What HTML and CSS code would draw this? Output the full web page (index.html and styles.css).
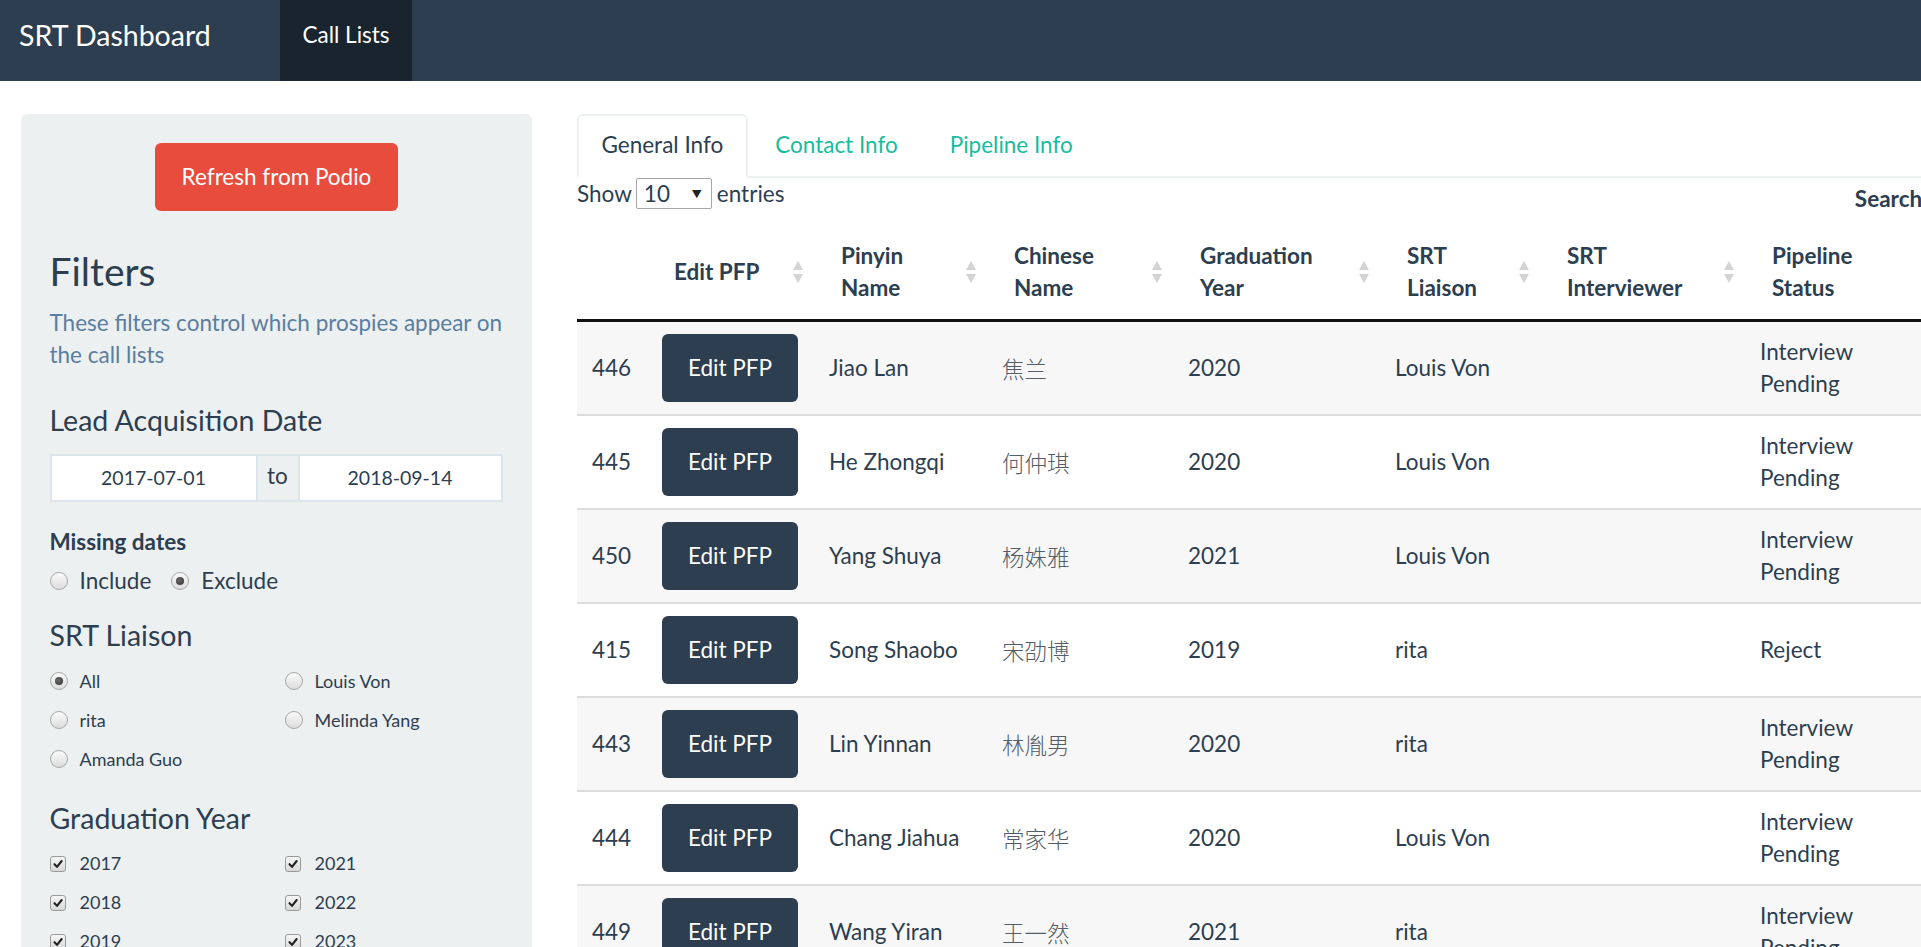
FILE: index.html
```html
<!DOCTYPE html>
<html lang="en">
<head>
<meta charset="utf-8">
<title>SRT Dashboard</title>
<link rel="stylesheet" href="styles.css">
</head>
<body>
<nav class="navbar">
  <div class="brand">SRT Dashboard</div>
  <ul class="nav">
    <li class="active">Call Lists</li>
  </ul>
</nav>
<div class="page">
  <aside class="well">
    <button class="btn-refresh">Refresh from Podio</button>
    <h3 class="filters-title">Filters</h3>
    <p class="help">These filters control which prospies appear on the call lists</p>

    <h4 class="date-title">Lead Acquisition Date</h4>
    <div class="daterange">
      <span class="date-input first">2017-07-01</span>
      <span class="addon">to</span>
      <span class="date-input second">2018-09-14</span>
    </div>

    <div class="control-label">Missing dates</div>
    <div class="inline-opts">
      <span class="opt"><span class="radio"></span>Include</span>
      <span class="opt"><span class="radio checked"></span>Exclude</span>
    </div>

    <h4 class="group-title">SRT Liaison</h4>
    <div class="opt-grid rows3">
      <span class="opt small"><span class="radio checked"></span>All</span>
      <span class="opt small"><span class="radio"></span>rita</span>
      <span class="opt small"><span class="radio"></span>Amanda Guo</span>
      <span class="opt small"><span class="radio"></span>Louis Von</span>
      <span class="opt small"><span class="radio"></span>Melinda Yang</span>
    </div>

    <h4 class="group-title grad-title">Graduation Year</h4>
    <div class="opt-grid rows4">
      <span class="opt small cb"><span class="checkbox"><svg viewBox="0 0 16 16"><path d="M4 8.2 L6.9 11.3 L12.2 4.6"/></svg></span>2017</span>
      <span class="opt small cb"><span class="checkbox"><svg viewBox="0 0 16 16"><path d="M4 8.2 L6.9 11.3 L12.2 4.6"/></svg></span>2018</span>
      <span class="opt small cb"><span class="checkbox"><svg viewBox="0 0 16 16"><path d="M4 8.2 L6.9 11.3 L12.2 4.6"/></svg></span>2019</span>
      <span class="opt small cb"><span class="checkbox"><svg viewBox="0 0 16 16"><path d="M4 8.2 L6.9 11.3 L12.2 4.6"/></svg></span>2020</span>
      <span class="opt small cb"><span class="checkbox"><svg viewBox="0 0 16 16"><path d="M4 8.2 L6.9 11.3 L12.2 4.6"/></svg></span>2021</span>
      <span class="opt small cb"><span class="checkbox"><svg viewBox="0 0 16 16"><path d="M4 8.2 L6.9 11.3 L12.2 4.6"/></svg></span>2022</span>
      <span class="opt small cb"><span class="checkbox"><svg viewBox="0 0 16 16"><path d="M4 8.2 L6.9 11.3 L12.2 4.6"/></svg></span>2023</span>
    </div>
  </aside>

  <main class="main">
    <ul class="tabs">
      <li class="active">General Info</li>
      <li>Contact Info</li>
      <li>Pipeline Info</li>
    </ul>

    <div class="dt-controls">
      <div class="dt-length">Show <span class="select">10<span class="caret">&#9660;</span></span> entries</div>
      <div class="dt-filter"><span class="search-label">Search:</span><span class="search-input"></span></div>
    </div>

    <table class="dt">
      <colgroup>
        <col class="c-id"><col class="c-edit"><col class="c-pinyin"><col class="c-zh"><col class="c-grad"><col class="c-liaison"><col class="c-int"><col class="c-pipe">
      </colgroup>
      <thead>
        <tr>
          <th class="th-id"></th>
          <th>Edit PFP<span class="sort"><svg viewBox="0 0 10 22"><polygon points="5,0 10,9 0,9"/><polygon points="0,13 10,13 5,22"/></svg></span></th>
          <th>Pinyin Name<span class="sort"><svg viewBox="0 0 10 22"><polygon points="5,0 10,9 0,9"/><polygon points="0,13 10,13 5,22"/></svg></span></th>
          <th>Chinese Name<span class="sort"><svg viewBox="0 0 10 22"><polygon points="5,0 10,9 0,9"/><polygon points="0,13 10,13 5,22"/></svg></span></th>
          <th>Graduation Year<span class="sort"><svg viewBox="0 0 10 22"><polygon points="5,0 10,9 0,9"/><polygon points="0,13 10,13 5,22"/></svg></span></th>
          <th>SRT Liaison<span class="sort"><svg viewBox="0 0 10 22"><polygon points="5,0 10,9 0,9"/><polygon points="0,13 10,13 5,22"/></svg></span></th>
          <th>SRT Interviewer<span class="sort"><svg viewBox="0 0 10 22"><polygon points="5,0 10,9 0,9"/><polygon points="0,13 10,13 5,22"/></svg></span></th>
          <th>Pipeline Status</th>
        </tr>
      </thead>
      <tbody>
        <tr><td>446</td><td><span class="btn-edit">Edit PFP</span></td><td>Jiao Lan</td><td class="zh">焦兰</td><td>2020</td><td>Louis Von</td><td></td><td>Interview Pending</td></tr>
        <tr><td>445</td><td><span class="btn-edit">Edit PFP</span></td><td>He Zhongqi</td><td class="zh">何仲琪</td><td>2020</td><td>Louis Von</td><td></td><td>Interview Pending</td></tr>
        <tr><td>450</td><td><span class="btn-edit">Edit PFP</span></td><td>Yang Shuya</td><td class="zh">杨姝雅</td><td>2021</td><td>Louis Von</td><td></td><td>Interview Pending</td></tr>
        <tr><td>415</td><td><span class="btn-edit">Edit PFP</span></td><td>Song Shaobo</td><td class="zh">宋劭博</td><td>2019</td><td>rita</td><td></td><td>Reject</td></tr>
        <tr><td>443</td><td><span class="btn-edit">Edit PFP</span></td><td>Lin Yinnan</td><td class="zh">林胤男</td><td>2020</td><td>rita</td><td></td><td>Interview Pending</td></tr>
        <tr><td>444</td><td><span class="btn-edit">Edit PFP</span></td><td>Chang Jiahua</td><td class="zh">常家华</td><td>2020</td><td>Louis Von</td><td></td><td>Interview Pending</td></tr>
        <tr><td>449</td><td><span class="btn-edit">Edit PFP</span></td><td>Wang Yiran</td><td class="zh">王一然</td><td>2021</td><td>rita</td><td></td><td>Interview Pending</td></tr>
      </tbody>
    </table>
  </main>
</div>
</body>
</html>
```

FILE: styles.css
```css
html, body {
  margin: 0;
  padding: 0;
  overflow: hidden;
}

body {
  width: 1921px;
  height: 947px;
  font-family: Lato, "Noto Sans CJK SC", sans-serif;
  font-size: 22.5px;
  line-height: 32px;
  color: #2c3e50;
  background: #fff;
}

/* ---------- navbar ---------- */
.navbar {
  display: flex;
  height: 81px;
  background: #2c3e50;
}

.brand {
  box-sizing: border-box;
  width: 280px;
  padding-left: 19px;
  font-size: 28.5px;
  line-height: 70px;
  color: #fff;
}

.nav {
  display: flex;
  margin: 0;
  padding: 0;
  list-style: none;
}

.nav li {
  height: 81px;
  padding: 0 22.5px;
  line-height: 70px;
  color: #fff;
}

.nav li.active {
  background: #1a242f;
}

/* ---------- layout ---------- */
.page {
  display: flex;
  gap: 45px;
  padding: 33px 0 0 21px;
}

.well {
  flex: 0 0 511px;
  box-sizing: border-box;
  height: 900px;
  padding: 29px 28.5px;
  background: #ecf0f1;
  border-radius: 6px;
}

.main {
  flex: 0 0 1610px;
  min-width: 0;
}

/* ---------- sidebar ---------- */
.btn-refresh {
  display: block;
  margin: 0 auto;
  height: 68px;
  padding: 0 26.5px;
  border: 0;
  border-radius: 6px;
  background: #e74c3c;
  color: #fff;
  font-family: Lato, sans-serif;
  font-size: 22.5px;
  line-height: 68px;
}

.filters-title {
  margin: 39px 0 14px;
  font-size: 39px;
  line-height: 43px;
  font-weight: 400;
}

.help {
  margin: 0;
  color: #597ea2;
}

h4 {
  font-size: 28.5px;
  line-height: 31px;
  font-weight: 400;
}

.date-title {
  margin: 34px 0 18px;
}

.daterange {
  display: flex;
  height: 48px;
  width: 453px;
}

.date-input {
  box-sizing: border-box;
  height: 48px;
  background: #fff;
  border: 2px solid #dce4ec;
  font-size: 19.5px;
  line-height: 44px;
  text-align: center;
}

.date-input.first {
  width: 208px;
}

.date-input.second {
  width: 205px;
}

.addon {
  box-sizing: border-box;
  width: 40px;
  height: 48px;
  background: #ecf0f1;
  border-top: 2px solid #dce4ec;
  border-bottom: 2px solid #dce4ec;
  line-height: 40px;
  text-align: center;
}

.control-label {
  margin-top: 24px;
  font-weight: 700;
}

.inline-opts {
  display: flex;
  gap: 20px;
  margin-top: 7px;
}

.opt {
  display: inline-flex;
  align-items: center;
  gap: 12px;
}

.group-title {
  margin: 23px 0 10.5px;
}

.grad-title {
  margin-top: 24px;
}

.opt-grid {
  display: grid;
  grid-template-columns: 235px 1fr;
  grid-auto-flow: column;
}

.opt-grid.rows3 {
  grid-template-rows: repeat(3, 39px);
}

.opt-grid.rows4 {
  grid-template-rows: repeat(4, 39px);
}

.opt.small {
  font-size: 18px;
  line-height: 39px;
}

.opt.cb {
  gap: 14px;
}

.radio {
  position: relative;
  box-sizing: border-box;
  width: 18px;
  height: 18px;
  border: 1px solid #a7a7a7;
  border-radius: 50%;
  background: linear-gradient(#fbfbfb, #dcdcdc);
  flex: 0 0 auto;
}

.radio.checked::after {
  content: "";
  position: absolute;
  left: 4px;
  top: 4px;
  width: 8px;
  height: 8px;
  border-radius: 50%;
  background: radial-gradient(circle at 40% 40%, #6a6a6a, #2e2e2e);
}

.checkbox {
  box-sizing: border-box;
  width: 16px;
  height: 16px;
  border: 1px solid #9a9a9a;
  border-radius: 3px;
  background: linear-gradient(#f6f6f6, #d8d8d8);
  flex: 0 0 auto;
  display: flex;
}

.checkbox svg {
  width: 14px;
  height: 14px;
  fill: none;
  stroke: #222;
  stroke-width: 2.4;
  stroke-linecap: round;
  stroke-linejoin: round;
}

/* ---------- tabs ---------- */
.tabs {
  display: flex;
  margin: 0;
  padding: 0;
  list-style: none;
  border-bottom: 2px solid #ecf0f1;
}

.tabs li {
  margin: 0 3px -2px 0;
  padding: 13px 22.5px 15px;
  border: 2px solid transparent;
  border-radius: 6px 6px 0 0;
  color: #18bc9c;
}

.tabs li.active {
  border-color: #ecf0f1 #ecf0f1 #fff;
  background: #fff;
  color: #2c3e50;
}

/* ---------- datatable controls ---------- */
.dt-controls {
  display: flex;
  align-items: flex-start;
  height: 31px;
}

.dt-length {
  display: flex;
  align-items: center;
  height: 31px;
  line-height: 31px;
}

.select {
  box-sizing: border-box;
  display: inline-flex;
  align-items: center;
  width: 76px;
  height: 31px;
  margin: 0 5px 0 4px;
  padding-left: 7px;
  border: 1px solid #a6a6a6;
  border-radius: 2px;
  background: #fff;
}

.caret {
  margin-left: auto;
  margin-right: 9px;
  font-size: 10px;
  line-height: 10px;
  color: #222;
}

.dt-filter {
  display: flex;
  align-items: center;
  margin-left: auto;
  padding-top: 4px;
}

.search-label {
  font-weight: 700;
}

.search-input {
  width: 250px;
  height: 31px;
  margin-left: 7px;
  border: 1px solid #aaa;
}

/* ---------- table ---------- */
.dt {
  width: 1344px;
  margin-top: 16px;
  table-layout: fixed;
  border-collapse: separate;
  border-spacing: 0;
}

.c-id { width: 70px; }
.c-edit { width: 167px; }
.c-pinyin { width: 173px; }
.c-zh { width: 186px; }
.c-grad { width: 207px; }
.c-liaison { width: 160px; }
.c-int { width: 205px; }
.c-pipe { width: 176px; }

.dt th {
  position: relative;
  padding: 15px 27px;
  text-align: left;
  vertical-align: middle;
  font-weight: 700;
  border-bottom: 3px solid #111;
}

.dt th.th-id {
  padding-left: 15px;
  padding-right: 15px;
}

.sort {
  position: absolute;
  right: 11px;
  top: 50%;
  width: 10px;
  height: 22px;
  margin-top: -11px;
}

.sort svg {
  display: block;
  width: 10px;
  height: 22px;
  fill: #d3d3d3;
}

.dt td {
  padding: 12px 15px;
  vertical-align: middle;
  border-top: 2px solid #dddddd;
}

.dt tbody tr:first-child td {
  border-top: 0;
}

.dt tbody tr:nth-child(odd) {
  background: #f7f7f7;
}

.dt td.zh {
  font-family: "Noto Sans CJK SC", sans-serif;
  font-weight: 300;
  color: #535d67;
}

.btn-edit {
  display: block;
  width: 136px;
  height: 68px;
  border-radius: 6px;
  background: #2c3e50;
  color: #fff;
  line-height: 68px;
  text-align: center;
}
```
